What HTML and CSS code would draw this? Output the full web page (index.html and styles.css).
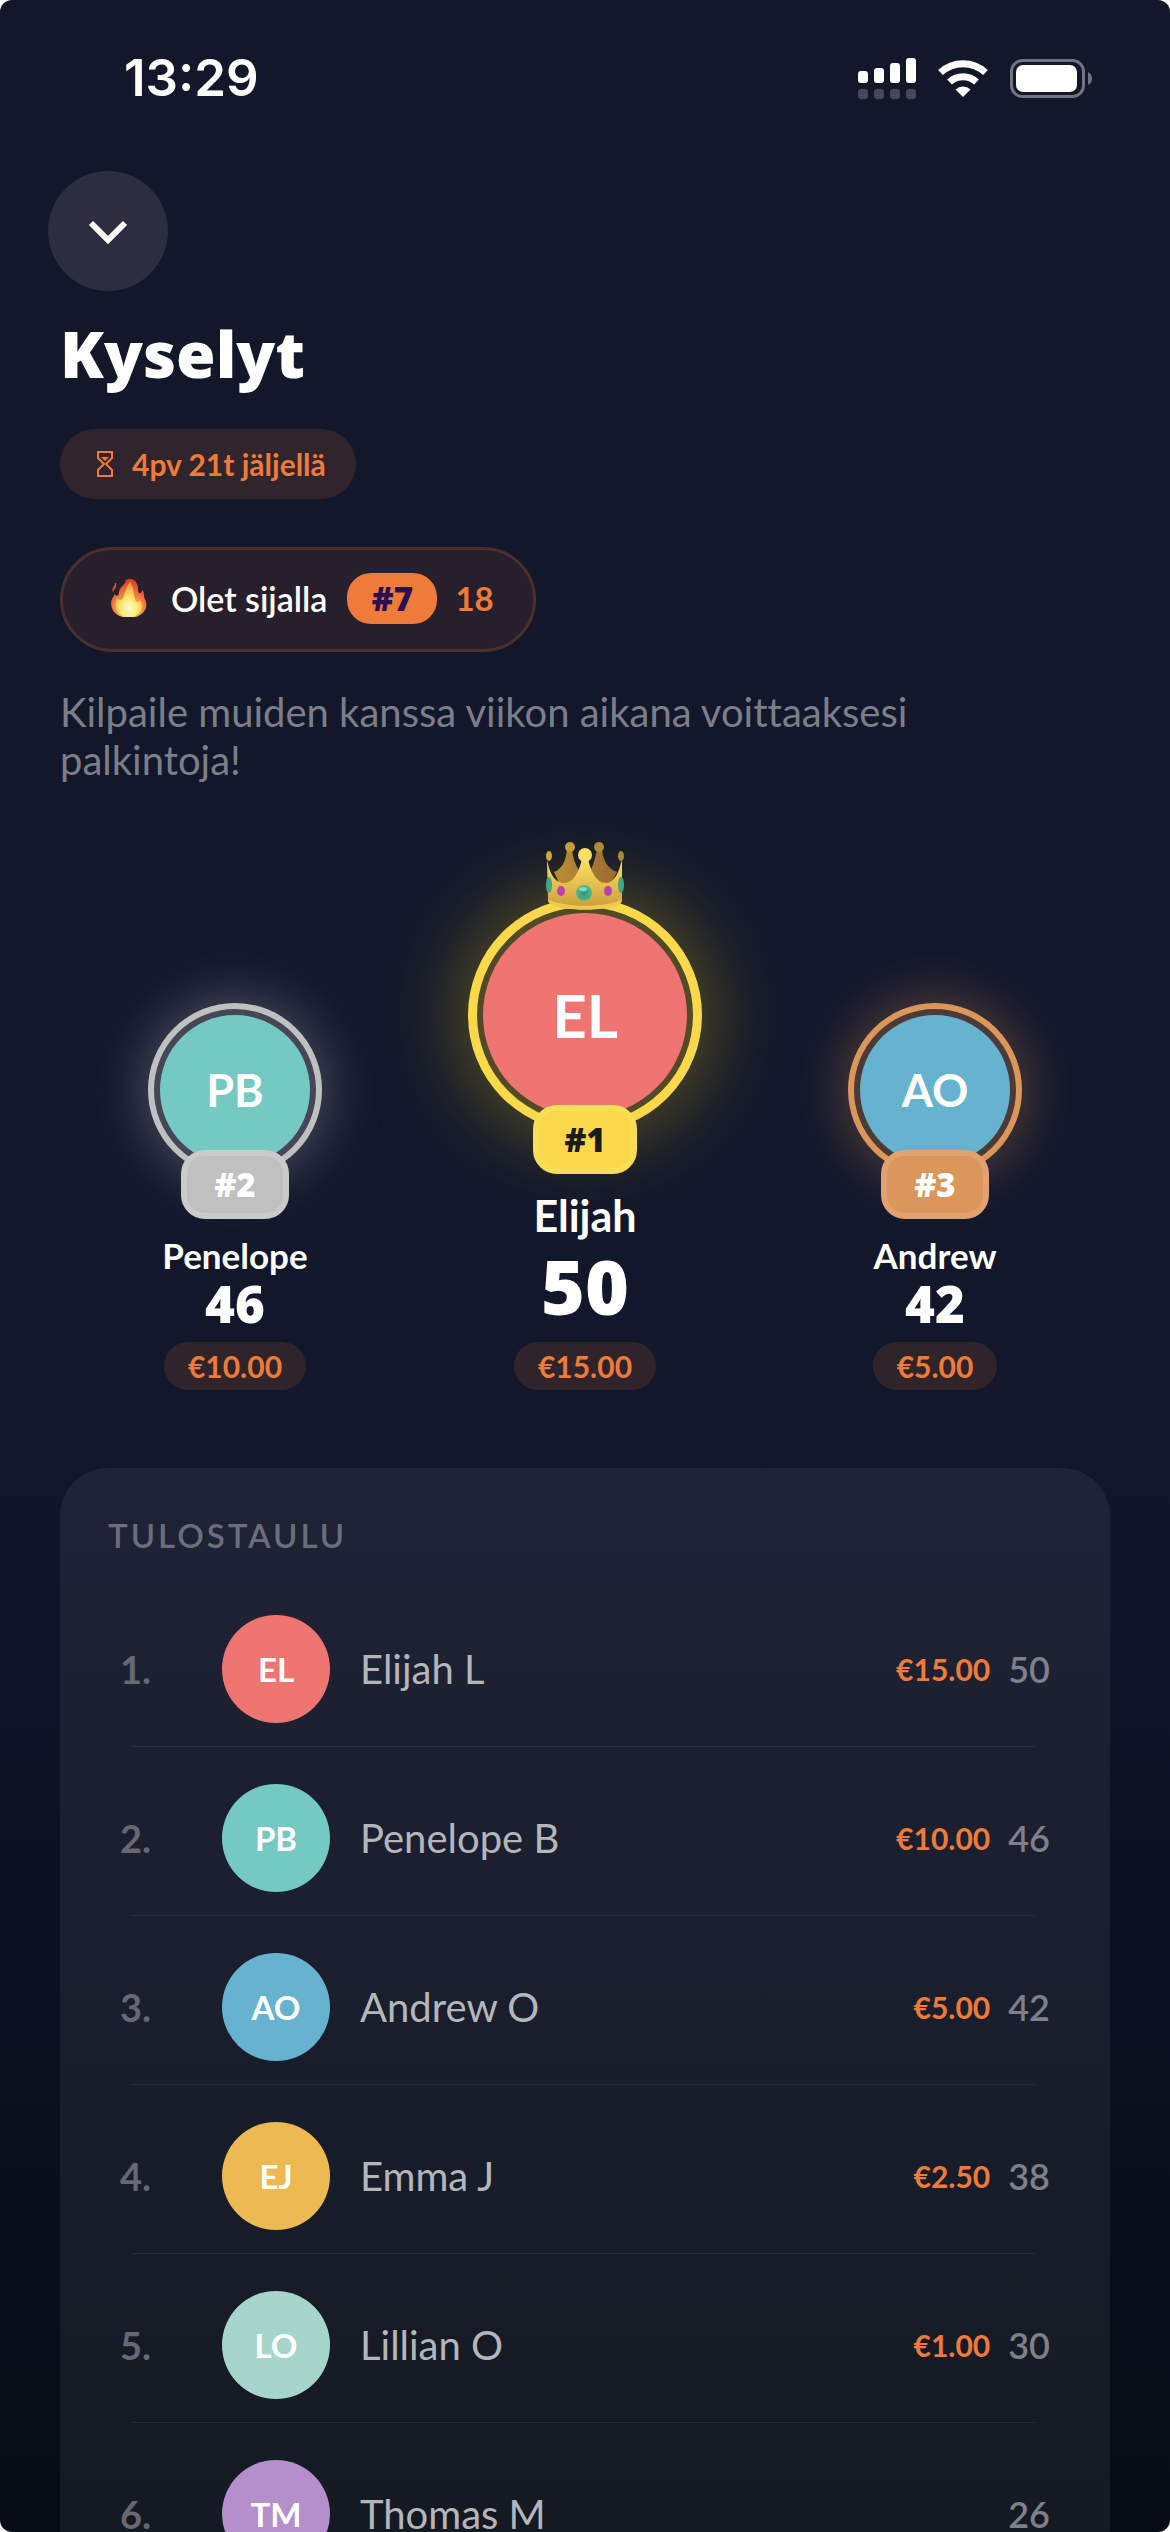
FILE: index.html
```html
<!DOCTYPE html>
<html lang="fi">
<head>
<meta charset="utf-8">
<meta name="viewport" content="width=device-width, initial-scale=1">
<title>Kyselyt</title>
<link rel="stylesheet" href="styles.css">
</head>
<body>
<div class="screen">
  <header class="status-bar">
    <time class="clock">13:29</time>
    <div class="status-icons">
      <svg width="58" height="41" viewBox="0 0 58 41" aria-hidden="true">
        <g fill="#fff"><rect x="0" y="13" width="10" height="12" rx="3"/><rect x="16" y="10" width="10" height="15" rx="3"/><rect x="32" y="5" width="10" height="20" rx="3"/><rect x="48" y="0" width="10" height="25" rx="3"/></g>
        <g fill="#464757"><rect x="0" y="31" width="10" height="10" rx="3"/><rect x="16" y="31" width="10" height="10" rx="3"/><rect x="32" y="31" width="10" height="10" rx="3"/><rect x="48" y="31" width="10" height="10" rx="3"/></g>
      </svg>
      <svg class="wifi" width="50" height="38" viewBox="0 0 50 38" aria-hidden="true">
        <path d="M25 38 17.500 30.500A11 11 0 0 1 32.500 30.500Z" fill="#fff"/>
        <path d="M11.500 23A20 20 0 0 1 38.500 23" fill="none" stroke="#fff" stroke-width="7"/>
        <path d="M2.500 13.500A33 33 0 0 1 47.500 13.500" fill="none" stroke="#fff" stroke-width="7"/>
      </svg>
      <svg width="82" height="39" viewBox="0 0 82 39" aria-hidden="true">
        <rect x="1.500" y="1.500" width="72" height="36" rx="11" fill="none" stroke="#727480" stroke-width="3"/>
        <rect x="6" y="6" width="61" height="27" rx="7" fill="#fff"/>
        <path d="M78 13Q82 15 82 19.500T78 26Z" fill="#727480"/>
      </svg>
    </div>
  </header>

  <main class="content">
    <button class="close" type="button" aria-label="Sulje">
      <svg width="40" height="26" viewBox="0 0 40 26" aria-hidden="true"><path d="M3 3 20 20 37 3" fill="none" stroke="#fff" stroke-width="6"/></svg>
    </button>
    <h1 class="title">Kyselyt</h1>

    <p class="time-left">
      <svg width="16" height="26" viewBox="0 0 16 26" aria-hidden="true">
        <path d="M1 1H15V7L9 13 15 19V25H1V19L7 13 1 7Z" fill="none" stroke="#ee7b39" stroke-width="2"/>
        <path d="M4 6H12L8 10Z" fill="#ee7b39"/>
      </svg>
      4pv 21t jäljellä
    </p>

    <p class="my-rank">
      <svg class="fire" width="36" height="38" viewBox="0 0 36 38" aria-hidden="true">
        <defs>
          <radialGradient id="flame" cx="50%" cy="82%" r="75%"><stop offset="0" stop-color="#ffe37a"/><stop offset=".35" stop-color="#fbab47"/><stop offset=".75" stop-color="#ef6236"/><stop offset="1" stop-color="#dd4327"/></radialGradient>
          <radialGradient id="core" cx="50%" cy="75%" r="65%"><stop offset="0" stop-color="#fffde0"/><stop offset=".5" stop-color="#fff06a"/><stop offset="1" stop-color="#f9a64d"/></radialGradient>
        </defs>
        <path d="M15 1C19-1 24 0 26 5 28 8 26 11 28 14 30 15 31 13 31 11 34 13 32 17 34 20 38 28 33 36 24 38H12C3 36-2 28 1 20 2 18 3 18 3 15 6 18 8 17 8 13 9 7 14 6 15 1Z" fill="url(#flame)"/>
        <path d="M4 4C4 8 0 9 2 13 3 10 6 9 5 4Z" fill="#e9512e"/>
        <path d="M19 3C14 9 14 15 12 19 10 22 7 21 6 19 2 28 7 36 13 38H22C30 35 34 28 29 21 27 24 25 24 24 20 22 14 23 8 19 3Z" fill="url(#core)" opacity=".9"/>
      </svg>
      <span>Olet sijalla</span>
      <strong class="rank-chip">#7</strong>
      <span class="my-score">18</span>
    </p>

    <p class="intro">Kilpaile muiden kanssa viikon aikana voittaaksesi palkintoja!</p>

    <section class="podium" aria-label="Kolme parasta">
      <article class="place silver">
        <div class="ring"><span class="face teal">PB</span></div>
        <span class="medal">#2</span>
        <h2 class="who">Penelope</h2>
        <p class="points">46</p>
        <p class="prize">€10.00</p>
      </article>
      <article class="place gold">
        <div class="ring">
          <svg class="crown" width="80" height="69" viewBox="0 0 80 69" aria-hidden="true">
            <defs>
              <linearGradient id="goldFront" x1="0" x2="0" y1="0" y2="1"><stop offset="0" stop-color="#f9e268"/><stop offset=".55" stop-color="#e2bc4e"/><stop offset="1" stop-color="#c99b38"/></linearGradient>
              <linearGradient id="goldBack" x1="0" x2="1"><stop offset="0" stop-color="#b98f34"/><stop offset="1" stop-color="#9b6932"/></linearGradient>
              <radialGradient id="emerald"><stop offset="0" stop-color="#3a8f7c"/><stop offset="1" stop-color="#4fbc8c"/></radialGradient>
            </defs>
            <path d="M22 8C21 20 17 28 9 31L16 46H64L72 31C63 28 58 20 57 8H52C50 18 48 26 44 32H36C31 26 28 18 27 8Z" fill="url(#goldBack)"/>
            <circle cx="25" cy="6" r="5" fill="#c69c3c"/><circle cx="54" cy="6" r="5" fill="#ab8a3c"/>
            <path d="M2 18C5 36 12 42 19 42 29 42 34 30 37 18H43C46 30 51 42 61 42 69 42 74 32 77 18L77 60C70 71 10 71 3 60Z" fill="url(#goldFront)"/>
            <path d="M3 58C16 67 64 67 77 58L76 62C65 71 15 71 4 62Z" fill="#f0c84c"/>
            <ellipse cx="4" cy="15" rx="3" ry="5" fill="#cfa53e"/><ellipse cx="76" cy="15" rx="3" ry="5" fill="#a98a36"/>
            <circle cx="40" cy="14" r="7" fill="#f7e062"/>
            <ellipse cx="4" cy="44" rx="3" ry="8" fill="#42a583"/><ellipse cx="76" cy="44" rx="3" ry="8" fill="#42a583"/>
            <ellipse cx="16" cy="50" rx="4" ry="5" fill="#ba42ae"/><ellipse cx="63" cy="50" rx="4" ry="5" fill="#ba42ae"/>
            <circle cx="39" cy="52" r="8" fill="url(#emerald)"/><ellipse cx="38" cy="48" rx="4" ry="2" fill="#7fdcb4"/>
          </svg>
          <span class="face coral">EL</span>
        </div>
        <span class="medal">#1</span>
        <h2 class="who">Elijah</h2>
        <p class="points">50</p>
        <p class="prize">€15.00</p>
      </article>
      <article class="place bronze">
        <div class="ring"><span class="face blue">AO</span></div>
        <span class="medal">#3</span>
        <h2 class="who">Andrew</h2>
        <p class="points">42</p>
        <p class="prize">€5.00</p>
      </article>
    </section>

    <section class="board">
      <h2 class="board-title">TULOSTAULU</h2>
      <ol class="rows">
        <li class="row"><span class="pos">1.</span><span class="avatar coral">EL</span><span class="name">Elijah L</span><span class="won">€15.00</span><span class="total">50</span></li>
        <li class="row"><span class="pos">2.</span><span class="avatar teal">PB</span><span class="name">Penelope B</span><span class="won">€10.00</span><span class="total">46</span></li>
        <li class="row"><span class="pos">3.</span><span class="avatar blue">AO</span><span class="name">Andrew O</span><span class="won">€5.00</span><span class="total">42</span></li>
        <li class="row"><span class="pos">4.</span><span class="avatar amber">EJ</span><span class="name">Emma J</span><span class="won">€2.50</span><span class="total">38</span></li>
        <li class="row"><span class="pos">5.</span><span class="avatar mint">LO</span><span class="name">Lillian O</span><span class="won">€1.00</span><span class="total">30</span></li>
        <li class="row"><span class="pos">6.</span><span class="avatar violet">TM</span><span class="name">Thomas M</span><span class="total">26</span></li>
      </ol>
    </section>
  </main>
</div>
</body>
</html>
```
FILE: styles.css
```css
* { box-sizing: border-box; }

body {
  margin: 0;
  background: #fff;
  color: #fff;
  font-family: Lato, "Liberation Sans", sans-serif;
  font-variant-ligatures: none;
}

h1, h2, p, ol { margin: 0; padding: 0; }

.screen {
  height: 100vh;
  display: flex;
  flex-direction: column;
  overflow: hidden;
  border-radius: 12px;
  background: linear-gradient(#14172a 0%, #12172b 55%, #0d1122 75%, #070b15 100%);
}

/* Status bar */
.status-bar {
  flex: none;
  height: 156px;
  padding: 0 78px 0 124px;
  display: flex;
  align-items: center;
  justify-content: space-between;
}
.clock {
  font: 600 51px/60px Inter, sans-serif;
}
.status-icons {
  display: flex;
  align-items: center;
  gap: 22px;
}

/* Page */
.content {
  flex: 1;
  min-height: 0;
  overflow-y: auto;
  scrollbar-width: none;
  padding: 15px 60px 0;
  display: flex;
  flex-direction: column;
  align-items: flex-start;
}
.content > * { flex: none; }

.close {
  width: 120px;
  height: 120px;
  margin-left: -12px;
  padding: 4px 0 0;
  border: 0;
  border-radius: 50%;
  background: #2c2d3e;
  display: flex;
  align-items: center;
  justify-content: center;
}

.title, .rank-chip, .medal, .points {
  font-family: "Open Sans", Lato, sans-serif;
  font-weight: 800;
}

.title {
  margin-top: 21px;
  font-size: 64px;
  line-height: 84px;
}

.time-left {
  margin-top: 33px;
  height: 70px;
  padding: 0 30px 0 37px;
  border-radius: 35px;
  background: #30242d;
  color: #ee7b39;
  display: flex;
  align-items: center;
  gap: 19px;
  font-size: 30px;
  font-weight: 700;
}

.my-rank {
  margin-top: 48px;
  height: 105px;
  padding: 0 39px 3px 48px;
  border: 3px solid #4b2f2d;
  border-radius: 53px;
  background: #281f2c;
  display: flex;
  align-items: center;
  font-size: 34px;
  font-weight: 600;
}
.fire { margin-right: 24px; }
.rank-chip {
  margin: 0 18px 0 20px;
  width: 90px;
  border-radius: 24px;
  background: #ee7b39;
  color: #2a0f55;
  text-align: center;
  font-size: 33px;
  line-height: 51px;
}
.my-score { color: #ee7b39; font-size: 33px; font-weight: 700; }

.intro {
  max-width: 900px;
  margin-top: 36px;
  color: #7c7e88;
  font-size: 40px;
  line-height: 48px;
}

/* Podium */
.podium {
  align-self: stretch;
  margin-top: 114px;
  display: grid;
  grid-template-columns: repeat(3, 1fr);
  align-items: end;
}
.place {
  display: flex;
  flex-direction: column;
  align-items: center;
}
.ring {
  position: relative;
  width: 174px;
  height: 174px;
  padding: 6px;
  border: 6px solid;
  border-radius: 50%;
}
.face {
  height: 100%;
  border-radius: 50%;
  display: flex;
  align-items: center;
  justify-content: center;
  color: #fff;
  font-size: 45px;
  font-weight: 700;
}
.medal {
  position: relative;
  width: 108px;
  height: 69px;
  margin-top: -27px;
  border: 6px solid;
  border-radius: 24px;
  text-align: center;
  font-size: 33px;
  line-height: 57px;
}
.who {
  margin-top: 18px;
  font-size: 35px;
  line-height: 36px;
  font-weight: 700;
}
.points {
  font-size: 51px;
  line-height: 60px;
}
.prize {
  margin-top: 9px;
  padding: 0 24px;
  border-radius: 24px;
  background: #30242b;
  color: #ee7b39;
  font-size: 30px;
  line-height: 48px;
  font-weight: 700;
}

.silver .ring {
  border-color: #c0c0c0;
  background: #454656;
  box-shadow: 0 0 60px rgba(200, 196, 206, .4);
}
.silver .medal { background: #c0c0c0; border-color: #cacaca; }

.bronze .ring {
  border-color: #db965b;
  background: #4b3a38;
  box-shadow: 0 0 60px rgba(219, 150, 91, .4);
}
.bronze .medal { background: #db965b; border-color: #e0a370; }

.gold .ring {
  width: 234px;
  height: 234px;
  border-width: 9px;
  border-color: #f9d84a;
  background: #524a27;
  box-shadow: 0 0 90px rgba(249, 216, 20, .4);
}
.gold .face { font-size: 60px; }
.gold .medal {
  width: 104px;
  background: #f9d84a;
  border-color: #fadd57;
  color: #1b1b1b;
}
.gold .who { font-size: 43px; line-height: 48px; }
.gold .points { font-size: 75px; line-height: 93px; }
.crown {
  position: absolute;
  left: 50%;
  top: -66px;
  margin-left: -40px;
}

/* Leaderboard */
.board {
  align-self: stretch;
  margin-top: 78px;
  padding: 48px 48px 0;
  border-radius: 48px 48px 0 0;
  background: rgba(255, 255, 255, .06);
}
.board-title {
  color: #6c6e7b;
  font-size: 33px;
  line-height: 39px;
  font-weight: 600;
  letter-spacing: 3px;
}
.rows {
  margin-top: 24px;
  padding: 0 12px;
  list-style: none;
}
.row {
  padding: 36px 0 24px;
  display: flex;
  align-items: center;
  background: linear-gradient(rgba(255, 255, 255, .07), rgba(255, 255, 255, .07)) 12px 100% / calc(100% - 27px) 1px no-repeat;
  border-bottom: 1px solid transparent;
}
.pos {
  width: 102px;
  color: #666873;
  font-size: 38px;
  font-weight: 700;
}
.avatar {
  width: 108px;
  height: 108px;
  border-radius: 50%;
  text-align: center;
  font-size: 33px;
  line-height: 108px;
  font-weight: 700;
}
.name {
  flex: 1;
  margin-left: 30px;
  color: #b5b6bc;
  font-size: 40px;
}
.won {
  color: #ee7b39;
  font-size: 30px;
  font-weight: 700;
}
.total {
  margin-left: 18px;
  color: #7e808a;
  font-size: 36px;
  font-weight: 600;
}

.coral { background: #ee7572; }
.teal { background: #74cac3; }
.blue { background: #66b3cf; }
.amber { background: #edb952; }
.mint { background: #a6d6cb; }
.violet { background: #b48fcb; }
```
